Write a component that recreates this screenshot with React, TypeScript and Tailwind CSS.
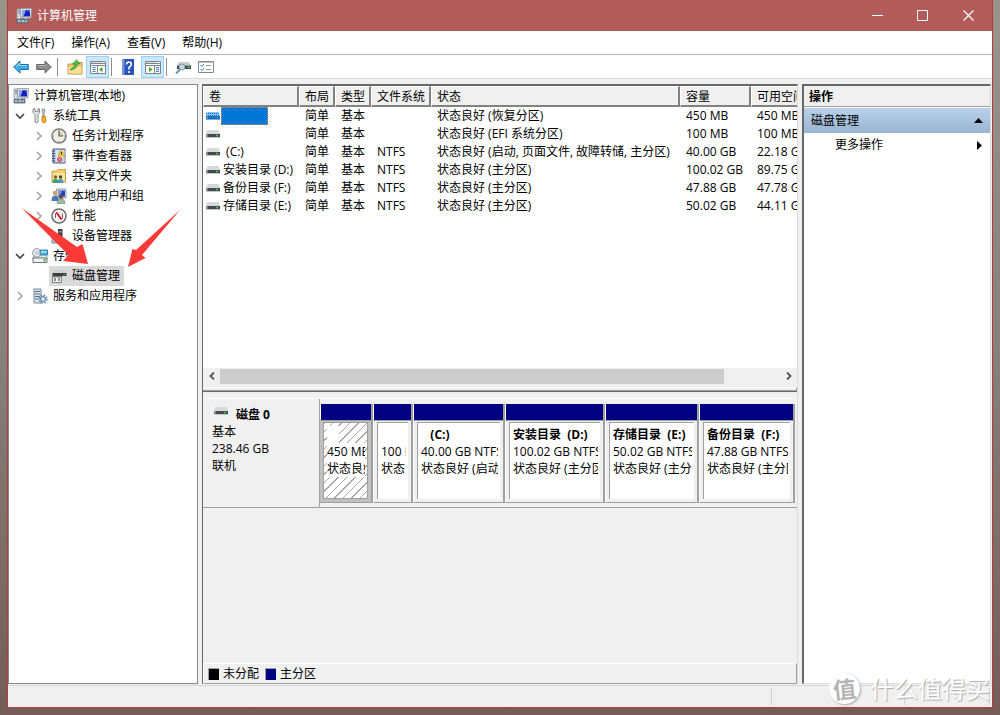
import type { ReactNode } from "react";

interface Volume {
  name: string;
  fs: string;
  status: string;
  capacity: string;
  free: string;
  selected?: boolean;
}

interface Partition {
  name: string;
  size: string;
  status: string;
  selected?: boolean;
}

interface TreeNode {
  label: string;
  icon: ReactNode;
  level: 0 | 1 | 2;
  state?: "open" | "closed";
  selected?: boolean;
}

const VOLUMES: Volume[] = [
  { name: "", fs: "", status: "状态良好 (恢复分区)", capacity: "450 MB", free: "450 MB", selected: true },
  { name: "", fs: "", status: "状态良好 (EFI 系统分区)", capacity: "100 MB", free: "100 MB" },
  { name: " (C:)", fs: "NTFS", status: "状态良好 (启动, 页面文件, 故障转储, 主分区)", capacity: "40.00 GB", free: "22.18 GB" },
  { name: "安装目录 (D:)", fs: "NTFS", status: "状态良好 (主分区)", capacity: "100.02 GB", free: "89.75 GB" },
  { name: "备份目录 (F:)", fs: "NTFS", status: "状态良好 (主分区)", capacity: "47.88 GB", free: "47.78 GB" },
  { name: "存储目录 (E:)", fs: "NTFS", status: "状态良好 (主分区)", capacity: "50.02 GB", free: "44.11 GB" },
];

const PARTITIONS: Partition[] = [
  { name: "    ", size: "450 MB", status: "状态良好", selected: true },
  { name: "", size: "100 MB", status: "状态良好" },
  { name: "   (C:)", size: "40.00 GB NTFS", status: "状态良好 (启动)" },
  { name: "安装目录  (D:)", size: "100.02 GB NTFS", status: "状态良好 (主分区)" },
  { name: "存储目录  (E:)", size: "50.02 GB NTFS", status: "状态良好 (主分区)" },
  { name: "备份目录  (F:)", size: "47.88 GB NTFS", status: "状态良好 (主分区)" },
];

const ComputerIcon = () => (
  <svg className="h-4 w-4 shrink-0" viewBox="0 0 16 16">
    <path d="M1 1h4v10H1z" fill="#d8dce0" stroke="#8b9299" strokeWidth=".8" />
    <path d="M2 3h2M2 5h2" stroke="#6d757d" />
    <path d="M4.500.5h11l-.5 9.500H4.500z" fill="#e3e3de" stroke="#8f959b" strokeWidth=".8" />
    <path d="M6 2h8v6.500H6z" fill="#1420b8" />
    <path d="M6 2h4L7.500 8.500H6z" fill="#86a4f4" />
    <path d="M10 2h4v3z" fill="#3c5be0" />
    <path d="M8 10h4v2H8z" fill="#9aa0a6" />
    <path d="M1 11.500h11V15H1z" fill="#7e96a6" stroke="#4f6270" strokeWidth=".8" />
    <path d="M2 13h2m2 0h2m2 0h1" stroke="#e7eef2" />
  </svg>
);

const ToolsIcon = () => (
  <svg className="h-4 w-4 shrink-0" viewBox="0 0 16 16">
    <path d="M1 1v3.500l2 2V14q1.500 2 3 0V6.500l1.500-2V1L6 .5V3.500H3V.5z" fill="#e4e6e8" stroke="#71777c" strokeWidth=".8" />
    <path d="M10.500 1h2l.5 3-1 1v4h-1V5l-1-1z" fill="#c7cbce" stroke="#71777c" strokeWidth=".7" />
    <path d="M10 8.500h3.500l.5 5q-2 3-4 0z" fill="#f7b520" stroke="#b87508" strokeWidth=".8" />
  </svg>
);

const ClockIcon = () => (
  <svg className="h-4 w-4 shrink-0" viewBox="0 0 16 16">
    <circle cx="8" cy="8" r="7" fill="#f3efdf" stroke="#77797c" strokeWidth="1.500" />
    <path d="M8 8V3.500A4.500 4.500 0 0 1 12.500 8z" fill="#e9cf91" />
    <path d="M8 3v5h4" fill="none" stroke="#3e5a85" strokeWidth="1.200" />
    <path d="M8 2v1m0 10v1M2 8h1m10 0h1" stroke="#888" />
  </svg>
);

const EventIcon = () => (
  <svg className="h-4 w-4 shrink-0" viewBox="0 0 16 16">
    <path d="M2 1h12v14H2z" fill="#b9cbe6" stroke="#4d5f85" />
    <path d="M5 2h8.500v12H5z" fill="#dfe6f1" />
    <path d="M7 4h3M7 6h2M11 10h2M11 12h2" stroke="#8fa3c4" strokeWidth=".8" />
    <path d="M1 3h3M1 5.500h3M1 8h3M1 10.500h3M1 13h3" stroke="#3d4c6d" />
    <path d="M10.500 2l3.500 6H7z" fill="#ffd52d" stroke="#b58a00" strokeWidth=".6" />
    <path d="M10.500 4v2.500" stroke="#222" />
    <circle cx="8.500" cy="11.500" r="2.500" fill="#d9434c" />
    <path d="M7.500 10.500l2 2m0-2l-2 2" stroke="#fff" strokeWidth=".8" />
  </svg>
);

const SharedIcon = () => (
  <svg className="h-4 w-4 shrink-0" viewBox="0 0 16 16">
    <path d="M1 3h5l1-1.500h7.500V14H1z" fill="#f3cf68" stroke="#b9913a" strokeWidth=".8" />
    <path d="M2 5h12v8H2z" fill="#fae29a" />
    <circle cx="4.500" cy="9" r="1.700" fill="#7c5a35" />
    <path d="M1.500 15q0-4 3-4t3 4z" fill="#35a37c" />
    <circle cx="9.500" cy="9" r="1.700" fill="#4a4340" />
    <path d="M6.500 15q0-4 3-4t3 4z" fill="#4f93ba" />
  </svg>
);

const UsersIcon = () => (
  <svg className="h-4 w-4 shrink-0" viewBox="0 0 16 16">
    <path d="M5.500 1H15v9H5.500z" fill="#d9dcdf" stroke="#878d93" strokeWidth=".8" />
    <path d="M7 2.500h7v6H7z" fill="#2342c8" />
    <path d="M7 2.500h4l-2 6H7z" fill="#7d9bea" />
    <circle cx="4" cy="5" r="2.300" fill="#d7a35a" />
    <path d="M.5 13q0-5.500 3.500-5.500T8 13z" fill="#4679b9" />
    <circle cx="10" cy="8.500" r="2.200" fill="#6a4a33" />
    <path d="M6 15.500q0-4.500 4-4.500t4 4.500z" fill="#9fb9a2" stroke="#4c6a68" strokeWidth=".5" />
  </svg>
);

const PerfIcon = () => (
  <svg className="h-4 w-4 shrink-0" viewBox="0 0 16 16">
    <circle cx="8" cy="8" r="7" fill="#fafafa" stroke="#67696b" strokeWidth="1.500" />
    <path d="M4.500 10V5.500L6 4M11.500 11V5.500" fill="none" stroke="#b94141" strokeWidth="1" />
    <path d="M5.500 4.500l5 7" stroke="#d3151d" strokeWidth="1.800" />
  </svg>
);

const DeviceIcon = () => (
  <svg className="h-4 w-4 shrink-0" viewBox="0 0 16 16">
    <path d="M1 8h6v7H1z" fill="#b9bfc4" stroke="#747b80" strokeWidth=".8" />
    <path d="M7 1h4.500v11H7z" fill="#3c4145" />
    <path d="M8 3h2.500v1.500H8z" fill="#949a9e" />
    <path d="M5 11h8.500v4H5z" fill="#dadddf" stroke="#70767b" strokeWidth=".8" />
    <path d="M8 8h1.500" stroke="#28c644" />
  </svg>
);

const StorageIcon = () => (
  <svg className="h-4 w-4 shrink-0" viewBox="0 0 16 16">
    <path d="M1 9l2-4h10l2 4v2H1z" fill="#e2e5e7" stroke="#8a9197" strokeWidth=".8" />
    <circle cx="4.800" cy="4.800" r="4.200" fill="#e3e8ec" stroke="#7f878e" strokeWidth=".8" />
    <circle cx="4.800" cy="4.800" r="1.200" fill="#fff" stroke="#8999a5" strokeWidth=".7" />
    <path d="M8 2h7.500v5H8z" fill="#4fb4df" stroke="#1d6f99" strokeWidth=".8" />
    <path d="M9 3h5.500v1.500H9z" fill="#b7e4f7" />
    <path d="M1 10h14v4.500H1z" fill="#f1f2f3" stroke="#5d6469" strokeWidth=".9" />
    <path d="M11.500 11h2v2.500h-2z" fill="#46b838" />
  </svg>
);

const DiskMgmtIcon = () => (
  <svg className="h-4 w-4 shrink-0" viewBox="0 0 16 16">
    <path d="M4 2h9.500L15.500 5H2z" fill="#cdd1d3" />
    <path d="M1.500 5h14V8h-14z" fill="#3b3f41" />
    <path d="M12.500 6.500h1.500" stroke="#39e14b" />
    <path d="M1 8v7h10V8" fill="#7c8184" />
    <path d="M2 9.500h8V14H2z" fill="#f2f3f3" />
    <path d="M4 10v3M8 10v3" stroke="#4b5053" strokeWidth="1.200" />
  </svg>
);

const ServicesIcon = () => (
  <svg className="h-4 w-4 shrink-0" viewBox="0 0 16 16">
    <path d="M2 1h7v14H2z" fill="#dce2e7" stroke="#6e7b86" strokeWidth=".9" />
    <path d="M3 3.500h5M3 6h5M3 8.500h5M3 11h4" stroke="#50748e" />
    <circle cx="11" cy="11" r="3.700" fill="none" stroke="#7297b7" strokeWidth="2" strokeDasharray="1.700 1.200" />
    <circle cx="11" cy="11" r="2.500" fill="#bdd4e8" stroke="#6187aa" strokeWidth="1" />
    <circle cx="11" cy="11" r="1" fill="#fff" />
  </svg>
);

function DriveIcon({ selected }: { selected?: boolean }) {
  return (
    <svg className="h-2 w-3.5 shrink-0" viewBox="0 0 14 8">
      <path d="M1.500 0h11L14 4H0z" fill={selected ? "#8dbfe8" : "#d6d9db"} />
      <path d="M0 4h14v3H0z" fill={selected ? "#1b6fb3" : "#45494b"} />
      <path d="M0 4h2v3H0z" fill={selected ? "#4d94cc" : "#85898b"} />
      <path d="M0 7.500h14" stroke={selected ? "#6fb0e6" : "#c4c7c9"} />
      <path d="M10 5.500h2" stroke={selected ? "#189aa0" : "#2fe044"} strokeWidth="1.500" />
      {selected && (
        <path d="M0 1.500h14M0 3.500h14M0 5.500h14" stroke="#0078d7" strokeDasharray="1 1" />
      )}
    </svg>
  );
}

const TREE: TreeNode[] = [
  { label: "计算机管理(本地)", icon: <ComputerIcon />, level: 0 },
  { label: "系统工具", icon: <ToolsIcon />, level: 1, state: "open" },
  { label: "任务计划程序", icon: <ClockIcon />, level: 2, state: "closed" },
  { label: "事件查看器", icon: <EventIcon />, level: 2, state: "closed" },
  { label: "共享文件夹", icon: <SharedIcon />, level: 2, state: "closed" },
  { label: "本地用户和组", icon: <UsersIcon />, level: 2, state: "closed" },
  { label: "性能", icon: <PerfIcon />, level: 2, state: "closed" },
  { label: "设备管理器", icon: <DeviceIcon />, level: 2 },
  { label: "存储", icon: <StorageIcon />, level: 1, state: "open" },
  { label: "磁盘管理", icon: <DiskMgmtIcon />, level: 2, selected: true },
  { label: "服务和应用程序", icon: <ServicesIcon />, level: 1, state: "closed" },
];

const INDENT = { 0: "pl-1", 1: "pl-[5px]", 2: "pl-6" };

function TreeRow({ node }: { node: TreeNode }) {
  return (
    <li className={`flex h-5 items-center ${INDENT[node.level]}`}>
      {node.level > 0 && (
        <span className="flex w-4 shrink-0 items-center">
          {node.state && (
            <button aria-label={`${node.state === "open" ? "折叠" : "展开"} ${node.label}`}>
              <svg className="h-3 w-3" viewBox="0 0 12 12" fill="none">
                {node.state === "open" ? (
                  <path d="M2 4l4 4 4-4" stroke="#404040" strokeWidth="1.600" />
                ) : (
                  <path d="M4 2l4 4-4 4" stroke="#a6a6a6" strokeWidth="1.600" />
                )}
              </svg>
            </button>
          )}
        </span>
      )}
      <button className={`flex h-5 items-center gap-[5px] whitespace-nowrap pr-1 ${node.level > 0 ? "pl-0.5" : ""} ${node.selected ? "bg-[#d9d9d9]" : ""}`}>
        {node.icon}
        {node.label}
      </button>
    </li>
  );
}

function ToolButton({ label, active, children }: { label: string; active?: boolean; children: ReactNode }) {
  return (
    <button
      aria-label={label}
      className={`flex h-[22px] w-[23px] items-center justify-center border ${active ? "border-[#99d1ff] bg-[#cce8ff]" : "border-transparent"}`}
    >
      {children}
    </button>
  );
}

const Separator = () => <span className="mx-0.5 h-[18px] w-px bg-[#8d8d8d]" />;

function Toolbar() {
  return (
    <div className="flex h-6 items-center border-b border-[#dcdcdc] bg-white pl-px">
      <ToolButton label="后退">
        <svg className="h-4 w-4" viewBox="0 0 16 16">
          <path d="M.7 8L7 2v3.500h8.300v5H7V14z" fill="#3eabe8" stroke="#1c6eaa" />
          <path d="M3 7.500L6.500 4.500v2H14" fill="none" stroke="#9bdcfb" />
        </svg>
      </ToolButton>
      <ToolButton label="前进">
        <svg className="h-4 w-4" viewBox="0 0 16 16">
          <path d="M15.300 8L9 2v3.500H.7v5H9V14z" fill="#8d8d8d" stroke="#666" />
          <path d="M2 6.500h8" stroke="#b9b9b9" />
        </svg>
      </ToolButton>
      <Separator />
      <div className="w-[3px]" />
      <ToolButton label="向上一级">
        <svg className="h-4 w-4" viewBox="0 0 16 16">
          <path d="M1 5h6l1.500-1.500H15V15H1z" fill="#eecb74" stroke="#b48d39" strokeWidth=".9" />
          <path d="M1.500 8h13v6.500h-13z" fill="#f8e19b" />
          <path d="M3.500 10q4-1 4.500-5H5.500L9.500.7 13 5h-2.500q-.5 5-7 6z" fill="#4dc13c" stroke="#248020" strokeWidth=".6" />
        </svg>
      </ToolButton>
      <ToolButton label="显示/隐藏控制台树" active>
        <svg className="h-4 w-4" viewBox="0 0 16 16">
          <path d="M.5 2.500h15v12H.5z" fill="#fff" stroke="#7d858c" />
          <path d="M1 4.500h14M1 6.500h14M7.500 7v7" stroke="#7d858c" />
          <path d="M1 3.500h11" stroke="#d5dade" />
          <path d="M2.500 8.500h3M2.500 10.500h3M2.500 12.500h3" stroke="#3d7ab8" />
          <path d="M12.500 8v5L9 10.500z" fill="#3ea626" />
        </svg>
      </ToolButton>
      <Separator />
      <div className="w-0.5" />
      <ToolButton label="帮助">
        <svg className="h-4 w-4" viewBox="0 0 16 16">
          <path d="M2 0h12v16H2z" fill="#2b53b9" />
          <path d="M2 0h2.500v16H2z" fill="#7895dc" />
          <path d="M6.500 5.500Q6.700 3 9 3t2.300 2.300Q11.300 7 9 8.500V10.500M9 12v2" fill="none" stroke="#fff" strokeWidth="1.600" />
        </svg>
      </ToolButton>
      <div className="w-0.5" />
      <ToolButton label="显示/隐藏操作窗格" active>
        <svg className="h-4 w-4" viewBox="0 0 16 16">
          <path d="M.5 2.500h15v12H.5z" fill="#fff" stroke="#7d858c" />
          <path d="M1 4.500h14M1 6.500h14M9.500 7v7" stroke="#7d858c" />
          <path d="M1 3.500h11" stroke="#d5dade" />
          <path d="M11 8.500h3M11 10.500h3M11 12.500h3" stroke="#3d7ab8" />
          <path d="M4 8v5l3.500-2.500z" fill="#3ea626" />
        </svg>
      </ToolButton>
      <Separator />
      <div className="w-0.5" />
      <ToolButton label="刷新">
        <svg className="h-4 w-4" viewBox="0 0 16 16">
          <path d="M3.500 3h10L16 6.500H2z" fill="#c9cdcf" />
          <path d="M2 6.500h14V10H2z" fill="#414547" />
          <path d="M12.500 8.300h2.500" stroke="#2fdf42" strokeWidth="1.500" />
          <circle cx="7" cy="8" r="3" fill="#c3d9e8" stroke="#8297a5" />
          <path d="M5 10.500L1 14.500" stroke="#6d8ea6" strokeWidth="1.800" />
        </svg>
      </ToolButton>
      <ToolButton label="属性">
        <svg className="h-4 w-4" viewBox="0 0 16 16">
          <path d="M.5 2.500h15v11H.5z" fill="#fff" stroke="#82888d" />
          <path d="M1 3h14" stroke="#82888d" />
          <path d="M2.500 6l1.500 1.500L6 5M2.500 10l1.500 1.500L6 9" fill="none" stroke="#2e86cf" />
          <path d="M8 6.500h5M8 10.500h5" stroke="#93999e" />
        </svg>
      </ToolButton>
    </div>
  );
}

function VolumeTable() {
  const head = "h-[21px] border-r-2 border-b-2 border-r-[#828282] border-b-[#828282] border-l border-l-white border-t border-t-white bg-[#f0f0f0] px-[5px] pt-px text-left leading-[17px] font-normal";
  return (
    <div className="min-h-0 flex-1 overflow-hidden bg-white">
      <table className="w-[694px] table-fixed border-separate border-spacing-0 whitespace-nowrap">
        <colgroup>
          <col className="w-24" />
          <col className="w-9" />
          <col className="w-9" />
          <col className="w-[60px]" />
          <col className="w-[249px]" />
          <col className="w-[71px]" />
          <col />
        </colgroup>
        <thead>
          <tr>
            <th className={head}>卷</th>
            <th className={head}>布局</th>
            <th className={head}>类型</th>
            <th className={head}>文件系统</th>
            <th className={head}>状态</th>
            <th className={head}>容量</th>
            <th className={head}>可用空间</th>
          </tr>
        </thead>
        <tbody>
          {VOLUMES.map((v, i) => (
            <tr key={i} className="h-[18px]">
              <td className="p-0">
                <div className="flex h-[18px] items-center gap-px pl-[3px]">
                  <DriveIcon selected={v.selected} />
                  {v.selected ? (
                    <span className="h-[18px] w-[47px] border border-dotted border-[#d08a58] bg-[#0078d7]" />
                  ) : (
                    <span className="whitespace-pre pl-0.5">{v.name}</span>
                  )}
                </div>
              </td>
              <td className="p-0 pl-1.5">简单</td>
              <td className="p-0 pl-1.5">基本</td>
              <td className="p-0 pl-1.5">{v.fs}</td>
              <td className="p-0 pl-1.5">{v.status}</td>
              <td className="p-0 pl-1.5">{v.capacity}</td>
              <td className="p-0 pl-1.5">{v.free}</td>
            </tr>
          ))}
        </tbody>
      </table>
    </div>
  );
}

function PartitionCell({ part }: { part: Partition }) {
  return (
    <div className="flex min-w-0 flex-col border-r-2 border-[#a0a0a0]">
      <div className="h-4 border-l border-white bg-[#000080]" />
      <div className={`flex-1 border-t border-b border-[#a0a0a0] px-[3px] pt-px pb-[3px] ${part.selected ? "bg-[#c0c0c0]" : "border-l border-l-white bg-[#f0f0f0]"}`}>
        <div
          className={`h-full overflow-hidden border-t border-l border-[#a0a0a0] pt-[3px] pr-0.5 pl-[3px] ${
            part.selected
              ? "border-r border-b bg-white bg-[repeating-linear-gradient(135deg,#a8a8a8_0px,#a8a8a8_1px,transparent_1px,transparent_6px)]"
              : "bg-white"
          }`}
        >
          <p className="h-[17px] overflow-hidden whitespace-pre font-bold">
            <span className="bg-white">{part.name}</span>
          </p>
          <p className={`h-[17px] overflow-hidden whitespace-nowrap ${part.selected ? "bg-white" : ""}`}>{part.size}</p>
          <p className={`h-[17px] overflow-hidden whitespace-nowrap ${part.selected ? "bg-white" : ""}`}>{part.status}</p>
        </div>
      </div>
    </div>
  );
}

function DiskPane() {
  return (
    <div className="flex h-[292px] flex-col bg-[#f0f0f0] leading-[17px]">
      <div className="mt-1.5 flex h-[110px] border-t border-white border-b border-b-[#a0a0a0]">
        <div className="w-[117px] shrink-0 border-r border-[#a0a0a0] pt-[7px] pl-[9px]">
          <div className="flex gap-2">
            <span className="pt-px pl-0.5">
              <DriveIcon />
            </span>
            <b>磁盘 0</b>
          </div>
          <p>基本</p>
          <p>238.46 GB</p>
          <p>联机</p>
        </div>
        <div className="mt-[5px] mb-1 grid min-w-0 flex-1 grid-cols-[53fr_40fr_92fr_100fr_94fr_96fr] pr-0.5">
          {PARTITIONS.map((p, i) => (
            <PartitionCell key={i} part={p} />
          ))}
        </div>
      </div>
      <div className="mt-auto flex h-[21px] items-center gap-1 border border-[#a0a0a0] border-t-white border-l-white pl-1">
        <span className="h-3 w-[11px] border-t border-l border-[#a0a0a0] bg-black" />
        <span className="mr-0.5">未分配</span>
        <span className="h-3 w-[11px] border-t border-l border-[#a0a0a0] bg-[#000080]" />
        <span>主分区</span>
      </div>
    </div>
  );
}

function ScrollBar() {
  return (
    <div className="flex h-4 items-center bg-[#f0f0f0]">
      <button aria-label="向左滚动" className="flex w-[17px] justify-center">
        <svg className="h-2 w-2" viewBox="0 0 8 8" fill="none">
          <path d="M6 .5L2.500 4 6 7.500" stroke="#505050" strokeWidth="1.800" />
        </svg>
      </button>
      <div className="h-[15px] flex-1">
        <div className="h-[15px] w-[90%] bg-[#cdcdcd]" />
      </div>
      <button aria-label="向右滚动" className="flex w-[17px] justify-center">
        <svg className="h-2 w-2" viewBox="0 0 8 8" fill="none">
          <path d="M2 .5L5.500 4 2 7.500" stroke="#505050" strokeWidth="1.800" />
        </svg>
      </button>
    </div>
  );
}

function ActionsPane() {
  return (
    <aside className="flex w-[189px] shrink-0 flex-col border-t-2 border-l-2 border-r border-[#696969] border-r-[#dcdcdc] border-b border-b-[#dcdcdc] bg-white">
      <h2 className="h-[21px] border-b border-[#a0a0a0] bg-[#f0f0f0] pl-[5px] leading-[21px] font-bold">操作</h2>
      <button className="mt-px flex h-[25px] items-center justify-between bg-linear-to-b from-[#b9d1ea] to-[#99b4d1] pr-[7px] pl-[7px]">
        磁盘管理
        <svg className="h-[5px] w-[9px]" viewBox="0 0 9 5">
          <path d="M4.500 0L9 5H0z" />
        </svg>
      </button>
      <button className="flex h-6 items-center justify-between pr-2 pl-[31px]">
        更多操作
        <svg className="h-[9px] w-[5px]" viewBox="0 0 5 9">
          <path d="M0 0l5 4.500L0 9z" />
        </svg>
      </button>
    </aside>
  );
}

function TitleBar() {
  return (
    <header className="flex h-[31px] items-center bg-[#b25b59] pl-2 text-white">
      <ComputerIcon />
      <h1 className="ml-[5px] flex-1">计算机管理</h1>
      <button aria-label="最小化" className="flex w-[45px] justify-center">
        <svg className="h-[11px] w-[11px]" viewBox="0 0 11 11" fill="none" stroke="white">
          <path d="M0 5.500h11" />
        </svg>
      </button>
      <button aria-label="最大化" className="flex w-[45px] justify-center">
        <svg className="h-[11px] w-[11px]" viewBox="0 0 11 11" fill="none" stroke="white">
          <path d="M.5.500h10v10H.5z" />
        </svg>
      </button>
      <button aria-label="关闭" className="flex w-[47px] justify-center">
        <svg className="h-[11px] w-[11px]" viewBox="0 0 11 11" fill="none" stroke="white">
          <path d="M.5.500l10 10M10.500.500l-10 10" strokeWidth="1.200" />
        </svg>
      </button>
    </header>
  );
}

export default function App() {
  return (
    <div className="relative flex min-h-screen flex-col bg-linear-to-b from-[#98958d] via-[#85807b] to-[#755c58] px-[7px] pb-[7px] font-['Open_Sans','Noto_Sans_CJK_SC',sans-serif] text-[12px] leading-[18px] text-black">
      <div className="flex flex-1 flex-col border border-t-0 border-[#b23b3b] bg-[#f0f0f0]">
        <TitleBar />
        <nav className="flex h-6 items-center gap-px border-b border-[#b4b4b4] bg-white pl-px">
          {["文件(F)", "操作(A)", "查看(V)", "帮助(H)"].map((m) => (
            <button key={m} className="px-2">
              {m}
            </button>
          ))}
        </nav>
        <Toolbar />

        <main className="mt-[5px] flex min-h-0 flex-1 gap-1 pr-px">
          <ul className="w-[190px] shrink-0 border border-[#828790] bg-white pt-px">
            {TREE.map((n) => (
              <TreeRow key={n.label} node={n} />
            ))}
          </ul>

          <section className="flex min-w-0 flex-1 flex-col border-t-2 border-l border-r border-[#696969] border-r-[#dcdcdc]">
            <VolumeTable />
            <ScrollBar />
            <div className="h-2 border-b border-[#696969] pt-[3px]">
              <div className="h-1 border-t border-r border-b border-[#a0a0a0] border-t-white" />
            </div>
            <DiskPane />
          </section>

          <ActionsPane />
        </main>

        <footer className="mt-px flex h-[22px] justify-end border-t border-[#d7d7d7] py-0.5">
          <span className="w-[133px] border-l border-[#d0d0d0]" />
          <span className="w-[85px] border-l border-[#d0d0d0]" />
          <span className="w-[3px] border-l border-[#d0d0d0]" />
        </footer>
      </div>

      {/* Hand-drawn pointers over the tree */}
      <svg className="pointer-events-none absolute top-[200px] left-[15px] h-[80px] w-[175px]" viewBox="15 200 175 80">
        <path d="M21.700 208L77 247 82.500 244 88 264 63 261 68.500 255z" fill="#fb3a37" />
        <path d="M180 210L142 255 145.500 258 128 267 132.500 249 136 250z" fill="#fb3a37" />
      </svg>

      {/* Watermark */}
      <div className="pointer-events-none absolute right-2.5 bottom-[11px] flex items-center gap-2.5 text-white">
        <span className="flex h-[31px] w-[31px] items-center justify-center rounded-full bg-white text-[23px] font-bold text-[#b5b5b5] shadow-[1px_1px_2px_#aaa]">
          <span className="-rotate-6">值</span>
        </span>
        <span className="text-[24px] leading-[31px] [text-shadow:1px_1px_1px_#aaa]">什么值得买</span>
      </div>
    </div>
  );
}
